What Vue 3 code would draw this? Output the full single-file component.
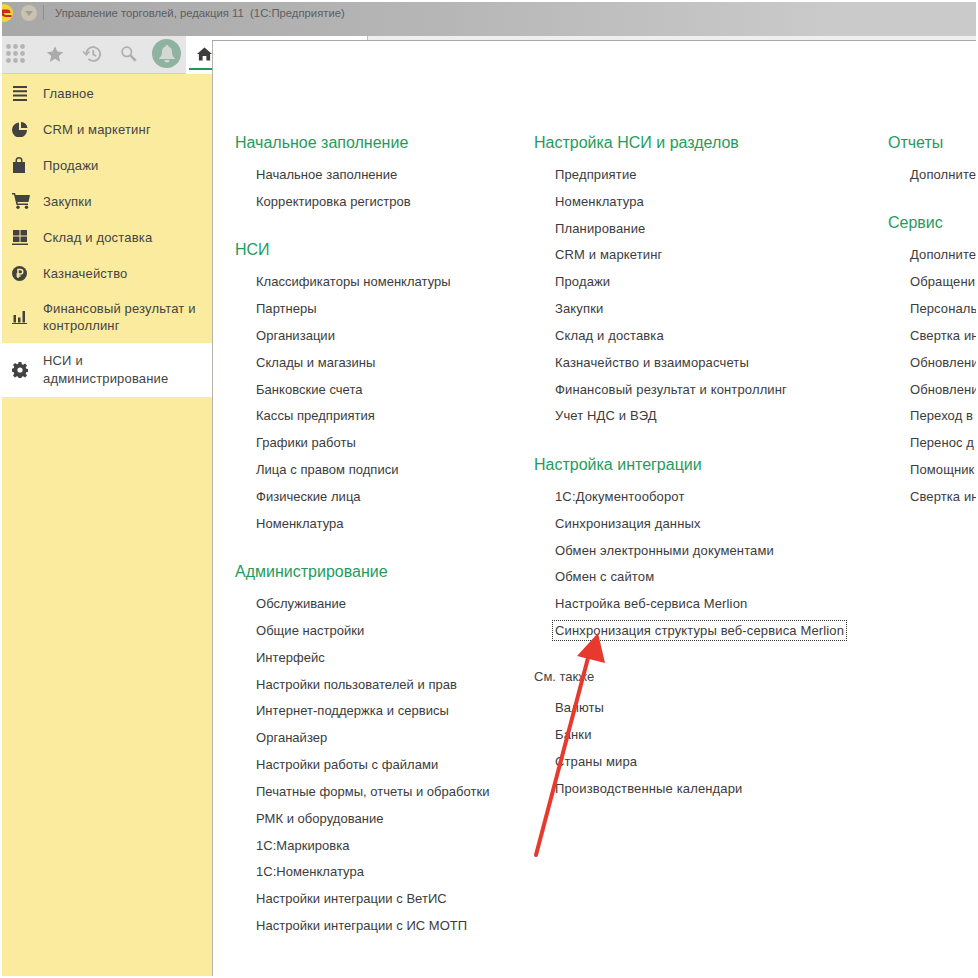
<script setup>
const nav = [
  { t: 'Главное', i: 'menu' },
  { t: 'CRM и маркетинг', i: 'pie' },
  { t: 'Продажи', i: 'bag' },
  { t: 'Закупки', i: 'cart' },
  { t: 'Склад и доставка', i: 'box' },
  { t: 'Казначейство', i: 'rub' },
  { t: 'Финансовый результат и контроллинг', i: 'bars', two: true },
  { t: 'НСИ и администрирование', i: 'gear', two: true, active: true },
]
const col1 = [
  { h: 'Начальное заполнение', items: ['Начальное заполнение', 'Корректировка регистров'] },
  { h: 'НСИ', items: ['Классификаторы номенклатуры', 'Партнеры', 'Организации', 'Склады и магазины', 'Банковские счета', 'Кассы предприятия', 'Графики работы', 'Лица с правом подписи', 'Физические лица', 'Номенклатура'] },
  { h: 'Администрирование', items: ['Обслуживание', 'Общие настройки', 'Интерфейс', 'Настройки пользователей и прав', 'Интернет-поддержка и сервисы', 'Органайзер', 'Настройки работы с файлами', 'Печатные формы, отчеты и обработки', 'РМК и оборудование', '1С:Маркировка', '1С:Номенклатура', 'Настройки интеграции с ВетИС', 'Настройки интеграции с ИС МОТП'] },
]
const col2 = [
  { h: 'Настройка НСИ и разделов', items: ['Предприятие', 'Номенклатура', 'Планирование', 'CRM и маркетинг', 'Продажи', 'Закупки', 'Склад и доставка', 'Казначейство и взаиморасчеты', 'Финансовый результат и контроллинг', 'Учет НДС и ВЭД'] },
  { h: 'Настройка интеграции', items: ['1С:Документооборот', 'Синхронизация данных', 'Обмен электронными документами', 'Обмен с сайтом', 'Настройка веб-сервиса Merlion', 'Синхронизация структуры веб-сервиса Merlion'] },
]
const seeAlso = ['Валюты', 'Банки', 'Страны мира', 'Производственные календари']
const col3 = [
  { h: 'Отчеты', items: ['Дополните'] },
  { h: 'Сервис', items: ['Дополните', 'Обращени', 'Персональ', 'Свертка ин', 'Обновлени', 'Обновлени', 'Переход в', 'Перенос д', 'Помощник', 'Свертка ин'] },
]
const focused = 'Синхронизация структуры веб-сервиса Merlion'
</script>

<template>
  <div class="page">
    <header class="titlebar">
      <svg class="logo" width="12" height="18" viewBox="0 0 12 18">
        <circle cx="2" cy="9" r="9" fill="#f5d33c"/>
        <path d="M-1 5.500h6c2.500 0 3.500 1.500 3.500 3.500H1.500c.3 1.800 2 2 3.500 2h4.500v2H4c-3 0-5-1.500-5-4z" fill="#c8281e"/>
      </svg>
      <span class="circle-btn"><svg width="8" height="5" viewBox="0 0 8 5"><path d="M0 0h8L4 5z" fill="#a39e92"/></svg></span>
      <span class="sep"></span>
      <span class="title">Управление торговлей, редакция 11 &nbsp;(1С:Предприятие)</span>
    </header>
    <div class="toolbar">
      <div class="tools">
        <svg class="grid" width="20" height="19" viewBox="0 0 20 19" fill="#b4b4b4">
          <template v-for="y in [2.5, 9.5, 16.5]" :key="y">
            <circle v-for="x in [2.5, 9.5, 16.5]" :key="x" :cx="x" :cy="y" r="2.4"/>
          </template>
        </svg>
        <svg width="18" height="18" viewBox="0 0 24 24" fill="#ababab"><path d="M12 1.500l3.200 7.200 7.800.8-5.900 5.200 1.800 7.800-6.900-4.100-6.900 4.100 1.800-7.800L1 9.500l7.800-.8z"/></svg>
        <svg width="20" height="18" viewBox="0 0 24 22" fill="none" stroke="#b0b0b0" stroke-width="2.200"><path d="M5 11a8.500 8.500 0 1 1 2.500 6"/><path d="M1 8l4 4 4-4" stroke-width="2"/><path d="M13.500 6v5.500l3.500 2"/></svg>
        <svg width="17" height="17" viewBox="0 0 20 20" fill="none" stroke="#aeaeae"><circle cx="8" cy="8" r="5.500" stroke-width="2"/><path d="M12.500 12.500l6 6" stroke-width="3"/></svg>
        <span class="bell"><svg width="16" height="18" viewBox="0 0 16 18" fill="#d3d8d2"><path d="M8 0c1 0 1.500.7 1.500 1.500C12 2.200 13 4.500 13 7c0 3 1 4.500 3 6.500V14H0v-.5C2 11.500 3 10 3 7c0-2.500 1-4.800 3.500-5.500C6.500.7 7 0 8 0z"/><path d="M5.500 15h5a2.500 2.500 0 0 1-5 0z"/></svg></span>
      </div>
      <div class="tabs">
        <div class="home-tab">
          <svg width="16" height="14" viewBox="0 0 16 14" fill="#3c3c3c"><path d="M8 0l8 7h-2v7h-4V9H6v5H2V7H0z"/></svg>
        </div>
      </div>
    </div>
    <div class="body">
      <nav class="sidebar">
        <div v-for="n in nav" :key="n.t" class="nav-item" :class="{ two: n.two, active: n.active }">
          <span class="nav-icon">
            <svg v-if="n.i === 'menu'" width="16" height="15" viewBox="0 0 16 15" fill="#424242"><path d="M1 0h14v2H1zM1 4.300h14v2H1zM1 8.600h14v2H1zM1 13h14v2H1z"/></svg>
            <svg v-else-if="n.i === 'pie'" width="16" height="15" viewBox="0 0 16 15" fill="#424242"><path d="M7 .5V8h8A7.500 7.500 0 1 1 7 .5z"/><path d="M9 0a7 7 0 0 1 6.500 6H9z"/></svg>
            <svg v-else-if="n.i === 'bag'" width="14" height="16" viewBox="0 0 14 16" fill="#424242"><path d="M1 5h2.500V3.500a3.500 3.500 0 0 1 7 0V5H13v11H1zM5 5h4V3.500a2 2 0 0 0-4 0z" fill-rule="evenodd"/></svg>
            <svg v-else-if="n.i === 'cart'" width="18" height="16" viewBox="0 0 18 16" fill="#424242"><path d="M0 0h3l.6 2H18l-1.500 7H5.500l.3 1.500H16V12H4.500L2 1.500H0z"/><circle cx="6" cy="14.300" r="1.700"/><circle cx="14.500" cy="14.300" r="1.700"/></svg>
            <svg v-else-if="n.i === 'box'" width="16" height="15" viewBox="0 0 16 15" fill="#424242"><path d="M1 0h6.500v5.500H1zM8.500 0H15v5.500H8.500zM1 6.500h6.500V12H1zM8.500 6.500H15V12H8.500zM0 13.400h16V15H0z"/></svg>
            <svg v-else-if="n.i === 'rub'" width="15" height="15" viewBox="0 0 15 15"><circle cx="7.500" cy="7.500" r="7.500" fill="#424242"/><path d="M6 12V3.500h2.500a2.200 2.200 0 0 1 0 4.500H4.500M4.500 10H8.500" fill="none" stroke="#fcee9f" stroke-width="1.500"/></svg>
            <svg v-else-if="n.i === 'bars'" width="15" height="13" viewBox="0 0 15 13" fill="#424242"><path d="M1.500 4h2.500v7.500H1.500zM6 6.500h2.500v5H6zM10.500 0H13v11.500h-2.500zM0 12h15v1H0z"/></svg>
            <svg v-else width="16" height="16" viewBox="0 0 16 16"><path d="M6.600 0h2.800l.4 2.200 1.300.6 1.900-1.300 2 2-1.300 1.900.6 1.300 2.200.4v2.800l-2.200.4-.6 1.300 1.300 1.900-2 2-1.900-1.300-1.300.6-.4 2.200H6.600l-.4-2.200-1.300-.6-1.900 1.300-2-2 1.300-1.900-.6-1.300L-.5 9.400V6.600l2.200-.4.6-1.300L1 3l2-2 1.900 1.300 1.300-.6z" fill="#424242"/><circle cx="8" cy="8" r="2.600" fill="#fff"/></svg>
          </span>
          <span class="nav-text">{{ n.t }}</span>
        </div>
      </nav>
      <main class="content">
        <div class="col c1">
          <section v-for="s in col1" :key="s.h" class="group">
            <h2>{{ s.h }}</h2>
            <a v-for="it in s.items" :key="it" class="link">{{ it }}</a>
          </section>
        </div>
        <div class="col c2">
          <section v-for="s in col2" :key="s.h" class="group">
            <h2>{{ s.h }}</h2>
            <a v-for="it in s.items" :key="it" class="link" :class="{ focus: it === focused }"><span>{{ it }}</span></a>
          </section>
          <section class="group also">
            <h3>См. также</h3>
            <a v-for="it in seeAlso" :key="it" class="link">{{ it }}</a>
          </section>
        </div>
        <div class="col c3">
          <section v-for="s in col3" :key="s.h" class="group">
            <h2>{{ s.h }}</h2>
            <a v-for="(it, i) in s.items" :key="i" class="link">{{ it }}</a>
          </section>
        </div>
      </main>
    </div>
    <svg class="arrow" width="80" height="232" viewBox="0 0 80 232">
      <path d="M6 227L58 30" stroke="#e8392f" stroke-width="4" stroke-linecap="round" fill="none"/>
      <path d="M68 5L47 28L75 35z" fill="#e8392f"/>
    </svg>
  </div>
</template>

<style>
html, body { margin: 0; background: #fff; }
</style>

<style scoped>
.page {
  position: relative;
  width: 978px;
  height: 978px;
  overflow: hidden;
  display: flex;
  flex-direction: column;
  padding: 2px;
  box-sizing: border-box;
  font-family: "Liberation Sans", Arial, sans-serif;
  color: #3c3c3c;
  background: #fff;
}
.titlebar {
  height: 34px;
  flex: none;
  background: linear-gradient(to right, #a8a8a8, #b6b6b6 45%, #cacaca 85%);
  display: flex;
  align-items: center;
  overflow: hidden;
}
.logo { flex: none; margin-bottom: 12px; }
.circle-btn {
  width: 16px;
  height: 16px;
  margin-left: 7px;
  border-radius: 50%;
  background: #c9c2b0;
  display: flex;
  align-items: center;
  justify-content: center;
  margin-bottom: 12px;
}
.sep { width: 1px; height: 15px; background: #8e8e8e; margin: 0 0 14px 6px; }
.title {
  font-size: 11.3px;
  color: #5e5e5e;
  margin-bottom: 12px;
  margin-left: 11px;
  white-space: nowrap;
}
.toolbar { height: 38px; flex: none; display: flex; }
.tools {
  width: 184px;
  background: #e6e6e6;
  display: flex;
  align-items: center;
  padding: 0 0 2px 4px;
  box-sizing: border-box;
  gap: 18px;
  border-bottom: 1px solid #d0d0d0;
}
.grid { margin-right: 2px; }
.bell {
  width: 29px;
  height: 29px;
  margin-left: -3px;
  border-radius: 50%;
  background: #8fb3a0;
  display: flex;
  align-items: center;
  justify-content: center;
}
.tabs {
  flex: 1;
  display: flex;
  align-items: flex-end;
  background: linear-gradient(to right, #fff 181px, #bdbdbd 181px, #bdbdbd 182px, #efefef 182px);
}
.home-tab {
  width: 26px;
  height: 38px;
  background: #fff;
  display: flex;
  padding: 11px 0 0 11px;
  box-sizing: border-box;
  position: relative;
  overflow: hidden;
}
.home-tab::after {
  content: "";
  position: absolute;
  left: 3px;
  right: 0;
  bottom: 4px;
  height: 2px;
  background: #1c9a5c;
}
.body { flex: 1; display: flex; min-height: 0; }
.sidebar {
  width: 210px;
  flex: none;
  background: #fbeb9e;
  padding-top: 1px;
  box-sizing: border-box;
}
.nav-item { height: 36px; display: flex; align-items: center; }
.nav-item.two { height: 52px; }
.nav-item.active { height: 54px; background: #fff; }
.nav-item.active .nav-text { line-height: 18px; }
.nav-icon {
  width: 41px;
  flex: none;
  padding-left: 10px;
  box-sizing: border-box;
  display: flex;
}
.nav-text {
  font-size: 13px;
  line-height: 17px;
  letter-spacing: .17px;
  color: #444;
  width: 165px;
}
.content {
  flex: 1;
  position: relative;
  z-index: 1;
  background: #fff;
  margin-top: -34px;
  border-top: 1px solid #a8a8a8;
  border-left: 1px solid #b4b4a8;
  display: flex;
  overflow: hidden;
  padding-top: 91px;
}
.col { flex: none; display: flex; flex-direction: column; }
.c1 { width: 321px; padding-left: 22px; box-sizing: border-box; }
.c2 { width: 354px; }
.c3 { width: 90px; }
.group { display: flex; flex-direction: column; margin-bottom: 24.6px; }
h2 {
  margin: 0;
  font-weight: 400;
  font-size: 16px;
  line-height: 22px;
  height: 22px;
  margin-bottom: 7px;
  color: #1f9c5d;
}
h3 {
  margin: 0 0 8px;
  font-weight: 400;
  font-size: 13px;
  line-height: 18px;
  color: #444;
}
.link {
  font-size: 13px;
  line-height: 17px;
  height: 26.83px;
  padding: 5px 0 4.83px 22px;
  box-sizing: border-box;
  color: #3c3c3c;
  white-space: nowrap;
}
.c1 .link { padding-left: 21px; letter-spacing: .03px; }
.c2 .link { padding-left: 21px; letter-spacing: .14px; }
.c3 .link { letter-spacing: .1px; }
.link.focus span {
  outline: 1px dotted #333;
  outline-offset: 1px;
  padding: 1px;
  margin-left: -1px;
}
.also { margin-top: 0; }
.arrow { position: absolute; left: 530px; top: 628px; z-index: 2; }
</style>
